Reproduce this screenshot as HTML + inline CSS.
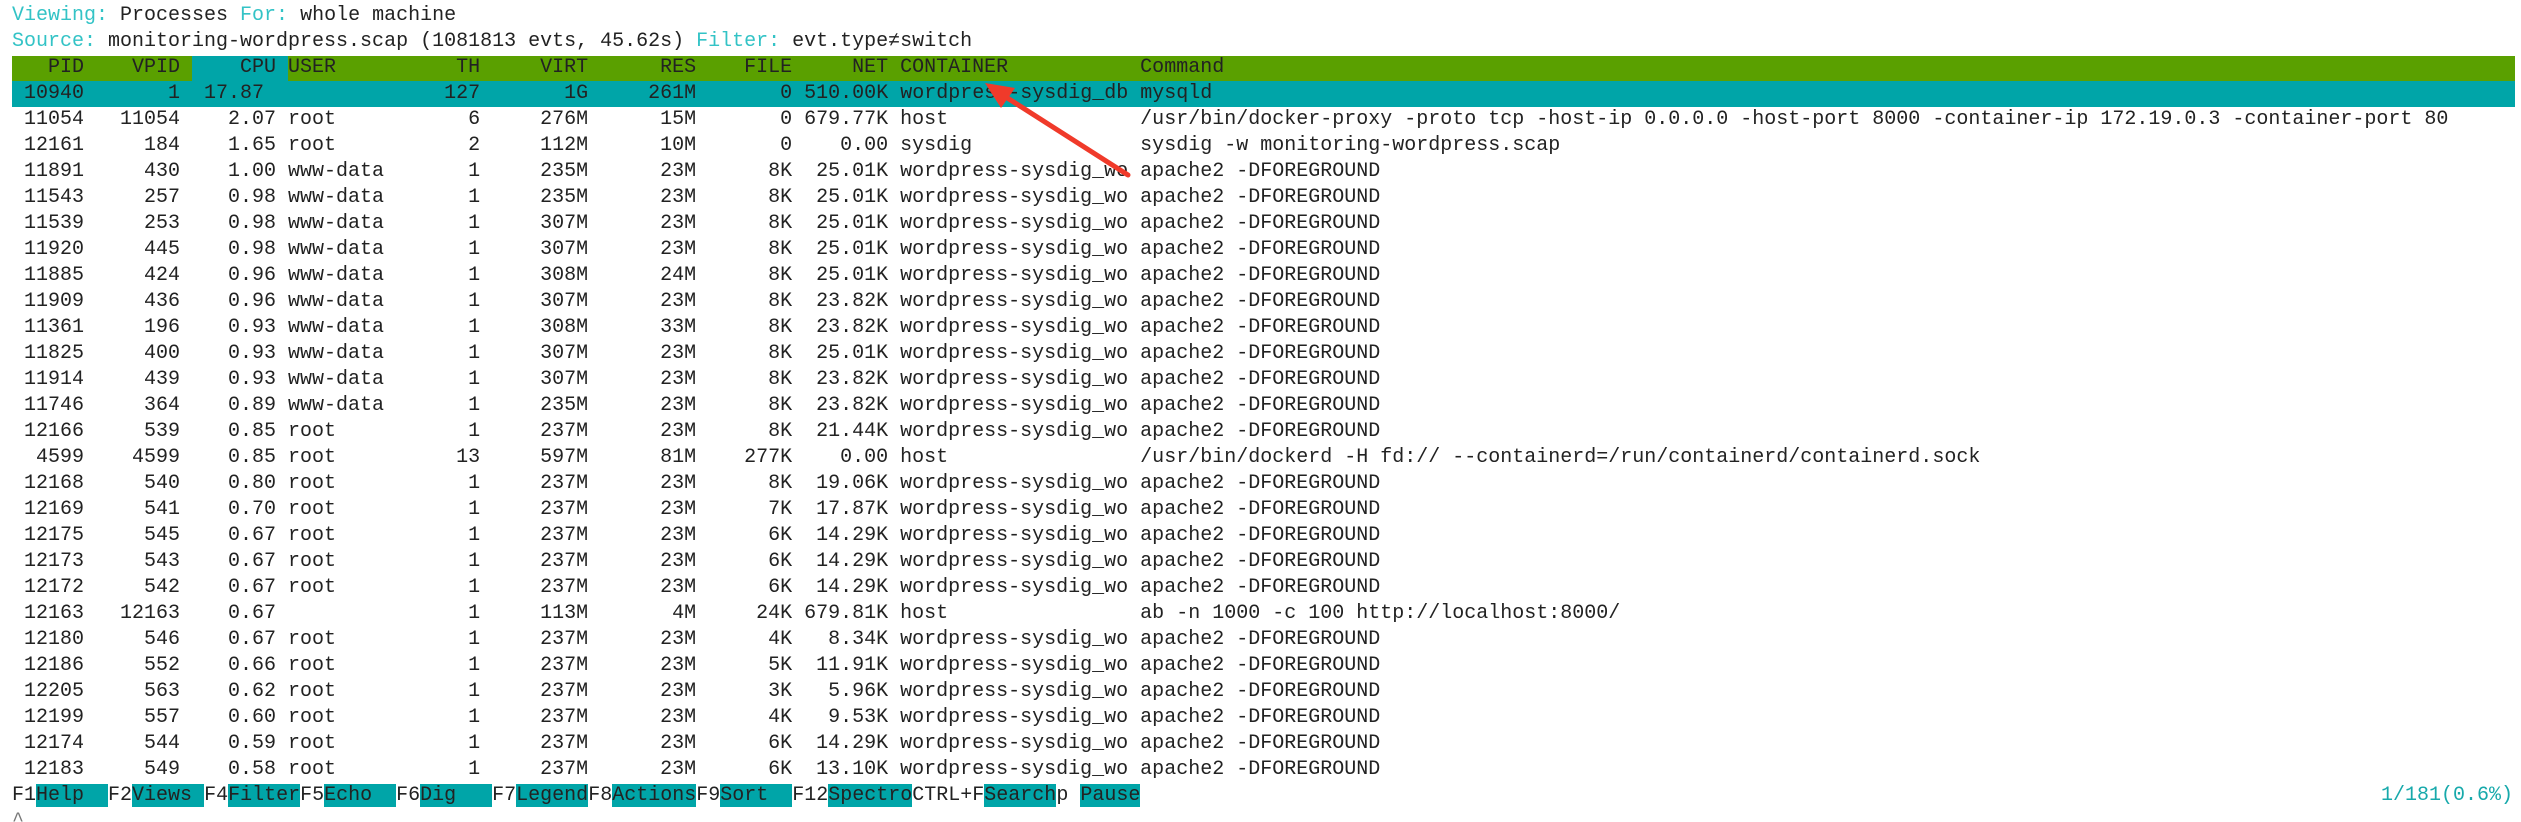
<!DOCTYPE html>
<html><head><meta charset="utf-8"><style>
html,body{margin:0;padding:0;background:#fff;width:2521px;height:822px;overflow:hidden;position:relative}
.l{position:absolute;left:12px;height:26px;line-height:26px;font-family:"Liberation Mono",monospace;font-size:20px;white-space:pre;color:#222}
.c{color:#33c3c6}
.hb{position:absolute;left:12px;width:2503px;height:26px}
.b{background:#00a5a8}
</style></head><body>
<div class="hb" style="top:56px;background:#5aa000"></div>
<div class="hb" style="top:81px;background:#00a5a8;height:26px"></div>
<div class="hb" style="top:56px;left:192px;width:96px;background:#00a5a8"></div>

<div class="l" style="top:3px"><span class="c">Viewing:</span> Processes <span class="c">For:</span> whole machine</div>
<div class="l" style="top:29px"><span class="c">Source:</span> monitoring-wordpress.scap (1081813 evts, 45.62s) <span class="c">Filter:</span> evt.type≠switch</div>
<div class="l" style="top:55px">   PID    VPID     CPU USER          TH     VIRT      RES    FILE     NET CONTAINER           Command</div>
<div class="l" style="top:81px"> 10940       1  17.87<span>               </span>127<span>       </span>1G<span>     </span>261M<span>       </span>0 510.00K wordpress-sysdig_db mysqld</div>
<div class="l" style="top:107px"> 11054   11054    2.07 root           6     276M      15M       0 679.77K host                /usr/bin/docker-proxy -proto tcp -host-ip 0.0.0.0 -host-port 8000 -container-ip 172.19.0.3 -container-port 80</div>
<div class="l" style="top:133px"> 12161     184    1.65 root           2     112M      10M       0    0.00 sysdig              sysdig -w monitoring-wordpress.scap</div>
<div class="l" style="top:159px"> 11891     430    1.00 www-data       1     235M      23M      8K  25.01K wordpress-sysdig_wo apache2 -DFOREGROUND</div>
<div class="l" style="top:185px"> 11543     257    0.98 www-data       1     235M      23M      8K  25.01K wordpress-sysdig_wo apache2 -DFOREGROUND</div>
<div class="l" style="top:211px"> 11539     253    0.98 www-data       1     307M      23M      8K  25.01K wordpress-sysdig_wo apache2 -DFOREGROUND</div>
<div class="l" style="top:237px"> 11920     445    0.98 www-data       1     307M      23M      8K  25.01K wordpress-sysdig_wo apache2 -DFOREGROUND</div>
<div class="l" style="top:263px"> 11885     424    0.96 www-data       1     308M      24M      8K  25.01K wordpress-sysdig_wo apache2 -DFOREGROUND</div>
<div class="l" style="top:289px"> 11909     436    0.96 www-data       1     307M      23M      8K  23.82K wordpress-sysdig_wo apache2 -DFOREGROUND</div>
<div class="l" style="top:315px"> 11361     196    0.93 www-data       1     308M      33M      8K  23.82K wordpress-sysdig_wo apache2 -DFOREGROUND</div>
<div class="l" style="top:341px"> 11825     400    0.93 www-data       1     307M      23M      8K  25.01K wordpress-sysdig_wo apache2 -DFOREGROUND</div>
<div class="l" style="top:367px"> 11914     439    0.93 www-data       1     307M      23M      8K  23.82K wordpress-sysdig_wo apache2 -DFOREGROUND</div>
<div class="l" style="top:393px"> 11746     364    0.89 www-data       1     235M      23M      8K  23.82K wordpress-sysdig_wo apache2 -DFOREGROUND</div>
<div class="l" style="top:419px"> 12166     539    0.85 root           1     237M      23M      8K  21.44K wordpress-sysdig_wo apache2 -DFOREGROUND</div>
<div class="l" style="top:445px">  4599    4599    0.85 root          13     597M      81M    277K    0.00 host                /usr/bin/dockerd -H fd:// --containerd=/run/containerd/containerd.sock</div>
<div class="l" style="top:471px"> 12168     540    0.80 root           1     237M      23M      8K  19.06K wordpress-sysdig_wo apache2 -DFOREGROUND</div>
<div class="l" style="top:497px"> 12169     541    0.70 root           1     237M      23M      7K  17.87K wordpress-sysdig_wo apache2 -DFOREGROUND</div>
<div class="l" style="top:523px"> 12175     545    0.67 root           1     237M      23M      6K  14.29K wordpress-sysdig_wo apache2 -DFOREGROUND</div>
<div class="l" style="top:549px"> 12173     543    0.67 root           1     237M      23M      6K  14.29K wordpress-sysdig_wo apache2 -DFOREGROUND</div>
<div class="l" style="top:575px"> 12172     542    0.67 root           1     237M      23M      6K  14.29K wordpress-sysdig_wo apache2 -DFOREGROUND</div>
<div class="l" style="top:601px"> 12163   12163    0.67                1     113M       4M     24K 679.81K host                ab -n 1000 -c 100 http://localhost:8000/</div>
<div class="l" style="top:627px"> 12180     546    0.67 root           1     237M      23M      4K   8.34K wordpress-sysdig_wo apache2 -DFOREGROUND</div>
<div class="l" style="top:653px"> 12186     552    0.66 root           1     237M      23M      5K  11.91K wordpress-sysdig_wo apache2 -DFOREGROUND</div>
<div class="l" style="top:679px"> 12205     563    0.62 root           1     237M      23M      3K   5.96K wordpress-sysdig_wo apache2 -DFOREGROUND</div>
<div class="l" style="top:705px"> 12199     557    0.60 root           1     237M      23M      4K   9.53K wordpress-sysdig_wo apache2 -DFOREGROUND</div>
<div class="l" style="top:731px"> 12174     544    0.59 root           1     237M      23M      6K  14.29K wordpress-sysdig_wo apache2 -DFOREGROUND</div>
<div class="l" style="top:757px"> 12183     549    0.58 root           1     237M      23M      6K  13.10K wordpress-sysdig_wo apache2 -DFOREGROUND</div>
<div class="l" style="top:783px">F1<span class="b">Help  </span>F2<span class="b">Views </span>F4<span class="b">Filter</span>F5<span class="b">Echo  </span>F6<span class="b">Dig   </span>F7<span class="b">Legend</span>F8<span class="b">Actions</span>F9<span class="b">Sort  </span>F12<span class="b">Spectro</span>CTRL+F<span class="b">Search</span>p <span class="b">Pause</span></div>
<div class="l" style="top:783px;left:auto;right:8px;color:#17a9ab">1/181(0.6%)</div>
<div class="l" style="top:809px;color:#777">^</div>

<svg style="position:absolute;left:0;top:0" width="2521" height="822">
<line x1="1128" y1="175" x2="998" y2="92" stroke="#f03a2a" stroke-width="5" stroke-linecap="round"/>
<polygon points="985,83 1001,108 1015,88" fill="#f03a2a"/>
</svg>
</body></html>
